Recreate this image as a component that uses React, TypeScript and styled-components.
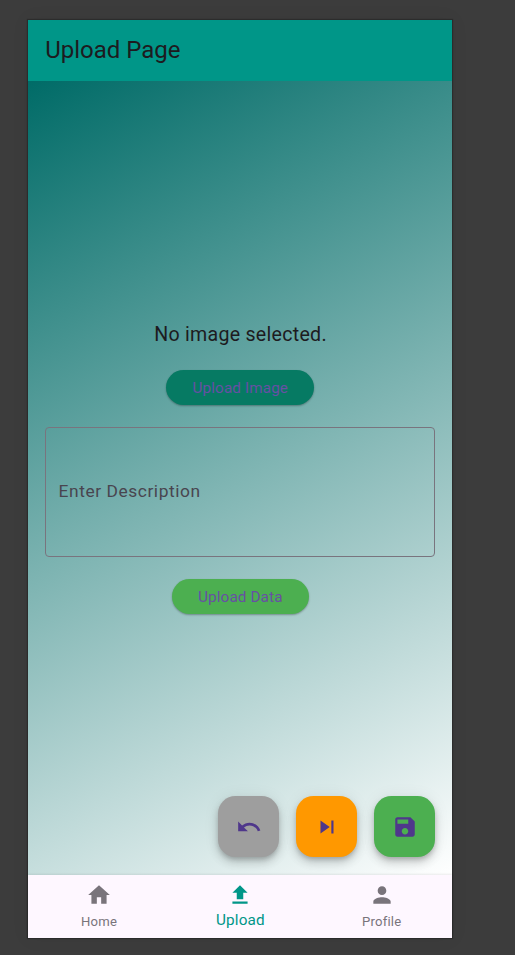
import React from 'react';
import styled, { createGlobalStyle } from 'styled-components';

const GlobalStyle = createGlobalStyle`
  * { box-sizing: border-box; }
  body { margin: 0; background: #3c3c3c; font-family: Roboto, sans-serif; }
  button { font-family: inherit; border: 0; padding: 0; }
`;

const Stage = styled.div`
  width: 515px;
  height: 955px;
  padding: 20px 63px 17px 28px;
  background: #3c3c3c;
  overflow: hidden;
`;

const Phone = styled.div`
  display: flex;
  flex-direction: column;
  height: 918px;
  box-shadow: 0 0 1px 1px #2c2c2c, 0 0 18px rgba(0, 0, 0, 0.06);
`;

const AppBar = styled.header`
  flex: 0 0 61px;
  display: flex;
  align-items: center;
  padding: 0 17.2px 2px;
  background: #009688;
`;

const Title = styled.h1`
  margin: 0;
  font-size: 24px;
  line-height: 30px;
  font-weight: 400;
  color: #1d1b20;
`;

const Body = styled.main`
  flex: 1;
  display: flex;
  flex-direction: column;
  align-items: center;
  padding: 240px 17px 0;
  background: linear-gradient(151.9deg, #006b67, #ffffff);
`;

const Message = styled.p`
  margin: 0 0 21px;
  padding-left: 1px;
  font-size: 19.6px;
  line-height: 28px;
  letter-spacing: 0.27px;
  color: #1d1b20;
`;

const PillButton = styled.button<{ $width: number; $color: string }>`
  flex: none;
  width: ${(p) => p.$width}px;
  height: 35px;
  margin-left: 0.6px;
  border-radius: 18px;
  background: ${(p) => p.$color};
  color: #6750a4;
  font-size: 15.3px;
  letter-spacing: 0.11px;
  box-shadow: 0 1px 2px rgba(0, 0, 0, 0.3);
`;

const Description = styled.div`
  flex: none;
  display: flex;
  align-items: center;
  width: 390px;
  height: 130px;
  margin: 22px 0;
  padding: 0 12.6px 2px;
  border: 1px solid #79747e;
  border-radius: 4px;
  color: #49454f;
  font-size: 17.4px;
  letter-spacing: 0.55px;
`;

const Actions = styled.div`
  display: flex;
  align-self: flex-end;
  gap: 17px;
  margin-top: 182px;
`;

const Fab = styled.button<{ $color: string }>`
  display: flex;
  align-items: center;
  justify-content: center;
  width: 61px;
  height: 61px;
  border-radius: 17.5px;
  background: ${(p) => p.$color};
  color: #4f378b;
  box-shadow: 0 3px 5px -1px rgba(0, 0, 0, 0.2), 0 6px 10px rgba(0, 0, 0, 0.14), 0 1px 16px rgba(0, 0, 0, 0.08);
`;

const NavBar = styled.nav`
  position: relative;
  flex: 0 0 63px;
  display: grid;
  grid-template-columns: repeat(3, 1fr);
  background: #fef7ff;
  box-shadow: 0 -1px 2px rgba(0, 0, 0, 0.08);
`;

const NavItem = styled.a<{ $active?: boolean }>`
  display: flex;
  flex-direction: column;
  align-items: center;
  padding: 7px 0 0 0.8px;
  color: ${(p) => (p.$active ? '#009688' : '#79747b')};
  font-size: ${(p) => (p.$active ? 15.3 : 13.1)}px;
  line-height: 20px;
  letter-spacing: ${(p) => (p.$active ? 0.15 : 0.2)}px;
`;

const NavLabel = styled.span<{ $active?: boolean }>`
  margin-top: ${(p) => (p.$active ? 2 : 4)}px;
`;

const Glyph = styled.svg`
  display: block;
  width: 26px;
  height: 26px;
  fill: currentColor;
`;

const paths = {
  undo: 'M12.5 8c-2.65 0-5.05.99-6.9 2.6L2 7v9h9l-3.62-3.62c1.39-1.16 3.16-1.88 5.12-1.88 3.54 0 6.55 2.31 7.6 5.5l2.37-.78C21.08 11.03 17.15 8 12.5 8z',
  next: 'M6 18l8.5-6L6 6v12zM16 6v12h2V6h-2z',
  save: 'M17 3H5c-1.11 0-2 .9-2 2v14c0 1.1.89 2 2 2h14c1.1 0 2-.9 2-2V7l-4-4zm-5 16c-1.66 0-3-1.34-3-3s1.34-3 3-3 3 1.34 3 3-1.34 3-3 3zm3-10H5V5h10v4z',
  home: 'M10 20v-6h4v6h5v-8h3L12 3 2 12h3v8z',
  upload: 'M5 20h14v-2H5v2zm0-10h4v6h6v-6h4l-7-7-7 7z',
  person: 'M12 12c2.21 0 4-1.79 4-4s-1.79-4-4-4-4 1.79-4 4 1.79 4 4 4zm0 2c-2.67 0-8 1.34-8 4v2h16v-2c0-2.66-5.33-4-8-4z',
};

const Icon = ({ name }: { name: keyof typeof paths }) => (
  <Glyph viewBox="0 0 24 24" aria-hidden="true">
    <path d={paths[name]} />
  </Glyph>
);

const navItems: { icon: keyof typeof paths; label: string; active?: boolean }[] = [
  { icon: 'home', label: 'Home' },
  { icon: 'upload', label: 'Upload', active: true },
  { icon: 'person', label: 'Profile' },
];

export default function App() {
  return (
    <>
      <GlobalStyle />
      <Stage>
        <Phone>
          <AppBar>
            <Title>Upload Page</Title>
          </AppBar>
          <Body>
            <Message>No image selected.</Message>
            <PillButton $width={148} $color="#067a63">Upload Image</PillButton>
            <Description>Enter Description</Description>
            <PillButton $width={137} $color="#4caf50">Upload Data</PillButton>
            <Actions>
              <Fab $color="#9e9e9e" aria-label="Undo"><Icon name="undo" /></Fab>
              <Fab $color="#ff9800" aria-label="Skip"><Icon name="next" /></Fab>
              <Fab $color="#4caf50" aria-label="Save"><Icon name="save" /></Fab>
            </Actions>
          </Body>
          <NavBar>
            {navItems.map((item) => (
              <NavItem key={item.label} $active={item.active}>
                <Icon name={item.icon} />
                <NavLabel $active={item.active}>{item.label}</NavLabel>
              </NavItem>
            ))}
          </NavBar>
        </Phone>
      </Stage>
    </>
  );
}
